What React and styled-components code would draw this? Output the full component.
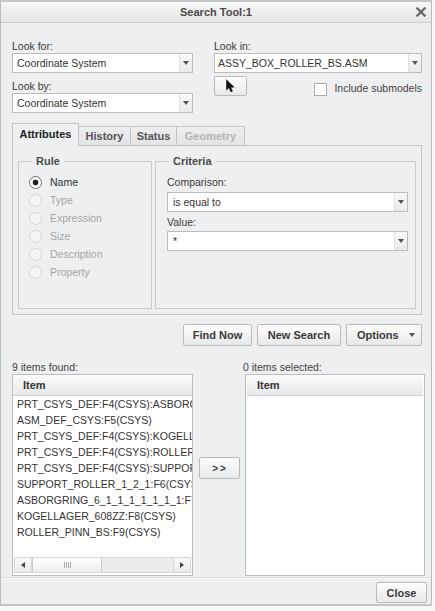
import React from "react";
import styled, { createGlobalStyle } from "styled-components";

const GlobalStyle = createGlobalStyle`
  html, body { margin: 0; padding: 0; background: #f7f7f7; }
  body {
    font-family: "Liberation Sans", Arial, sans-serif;
    font-size: 10.5px;
    color: #333;
  }
  * { box-sizing: border-box; }
`;

const Window = styled.div`
  width: 432px;
  height: 606px;
  border: 1px solid #b7babb;
  border-top: 2px solid #c6c8c9;
  border-bottom: 2px solid #c3c5c6;
  background: #edeff0;
  display: flex;
  flex-direction: column;
`;

const TitleBar = styled.div`
  height: 21px;
  flex: none;
  border-bottom: 1px solid #c9cbcc;
  background: linear-gradient(#f6f7f7, #e4e6e7);
  display: flex;
  align-items: center;
  justify-content: center;
  position: relative;
`;

const Title = styled.span`
  font-size: 11px;
  font-weight: bold;
  color: #4a4a4a;
`;

const CloseX = styled.span`
  position: absolute;
  right: 5px;
  top: 5px;
  display: flex;
`;

const Body = styled.div`
  flex: 1;
  padding: 16px 9px 1px 11px;
  display: flex;
  flex-direction: column;
`;

const TopGrid = styled.div`
  display: grid;
  grid-template-columns: 181px 1fr;
  column-gap: 21px;
`;

const Column = styled.div`
  display: flex;
  flex-direction: column;
`;

const Label = styled.div`
  height: 14px;
  line-height: 14px;
  margin-top: ${(p) => p.$top || 0}px;
  color: #3a3a3a;
`;

const SelectBox = styled.div`
  height: 20px;
  margin-top: ${(p) => p.$top || 0}px;
  border: 1px solid #b9bdbf;
  background: #fff;
  display: flex;
`;

const SelectText = styled.span`
  flex: 1;
  padding-left: ${(p) => p.$pad || 4}px;
  line-height: 18px;
  white-space: nowrap;
  overflow: hidden;
  color: #333;
`;

const DropButton = styled.span`
  width: 13px;
  border-left: 1px solid #dfe1e2;
  background: linear-gradient(#f8f8f8, #e9eaea);
  display: flex;
  align-items: center;
  justify-content: center;
`;

const Arrow = styled.span`
  display: block;
  width: 0;
  height: 0;
  border-left: 3.5px solid transparent;
  border-right: 3.5px solid transparent;
  border-top: 4px solid #555;
  margin-left: ${(p) => (p.$push ? "auto" : "0")};
`;

const PickRow = styled.div`
  margin-top: 3px;
  display: flex;
  align-items: center;
`;

const Button = styled.button`
  font-family: inherit;
  height: ${(p) => p.$h || 22}px;
  width: ${(p) => p.$w}px;
  padding: 0;
  border: 1px solid #b7babb;
  border-radius: 2px;
  background: linear-gradient(#fdfdfd, #e7e9ea);
  font-size: 11px;
  font-weight: bold;
  color: #3a3a3a;
  display: flex;
  align-items: center;
  justify-content: center;
  flex: none;
`;

const OptionsButton = styled(Button)`
  justify-content: flex-start;
  padding: 0 6px 0 10px;
`;

const MoveButton = styled(Button)`
  font-size: 10px;
  letter-spacing: 2px;
  padding-left: 2px;
`;

const Check = styled.span`
  width: 13px;
  height: 13px;
  margin-left: auto;
  margin-top: 6px;
  border: 1px solid #a9adaf;
  background: #fff;
`;

const CheckLabel = styled.span`
  margin-left: 7px;
  margin-top: 4px;
  color: #444;
`;

const TabStrip = styled.div`
  margin-top: 10px;
  height: 22px;
  display: flex;
  align-items: flex-end;
  position: relative;
  z-index: 1;
`;

const Tab = styled.div`
  width: ${(p) => p.$w}px;
  height: ${(p) => (p.$active ? 23 : 19)}px;
  margin-bottom: ${(p) => (p.$active ? -1 : 0)}px;
  border: 1px solid #c2c5c6;
  border-bottom: none;
  border-left: ${(p) => (p.$first ? "1px solid #c2c5c6" : "none")};
  background: ${(p) =>
    p.$active ? "#edeff0" : "linear-gradient(#eceeef, #e2e4e5)"};
  font-size: 11px;
  font-weight: bold;
  color: ${(p) => (p.$disabled ? "#b2b5b7" : p.$active ? "#222" : "#555")};
  display: flex;
  align-items: center;
  justify-content: center;
  padding-bottom: ${(p) => (p.$active ? 3 : 0)}px;
`;

const Panel = styled.div`
  height: 170px;
  border: 1px solid #c2c5c6;
  padding: 9px 5px 5px 5px;
  display: flex;
  gap: 3px;
`;

const Group = styled.fieldset`
  margin: 0;
  padding: 0;
  min-width: 0;
  width: ${(p) => (p.$w ? `${p.$w}px` : "auto")};
  flex: ${(p) => (p.$w ? "none" : 1)};
  border: 1px solid #c8cbcc;
  display: flex;
  flex-direction: column;
`;

const Legend = styled.legend`
  margin-left: 13px;
  padding: 0 4px;
  line-height: 13px;
  font-size: 11px;
  font-weight: bold;
  color: #4a4a4a;
`;

const RadioList = styled.div`
  padding: 5px 0 0 10px;
  display: flex;
  flex-direction: column;
`;

const RadioRow = styled.div`
  height: 18px;
  display: flex;
  align-items: center;
  color: ${(p) => (p.$disabled ? "#a3a6a8" : "#333")};
`;

const RadioDot = styled.span`
  width: 13px;
  height: 13px;
  border-radius: 50%;
  border: 1px solid ${(p) => (p.$checked ? "#6f7375" : "#d2d4d5")};
  background: ${(p) =>
    p.$checked
      ? "radial-gradient(circle, #222 0 2.6px, #fff 3.2px)"
      : "#f4f5f5"};
  margin-right: 8px;
  flex: none;
`;

const CriteriaBody = styled.div`
  padding: 7px 7px 0 11px;
  display: flex;
  flex-direction: column;
`;

const ActionRow = styled.div`
  margin-top: 9px;
  display: flex;
  justify-content: flex-end;
  gap: 5px;
`;

const ListsGrid = styled.div`
  margin-top: 14px;
  margin-right: -3px;
  display: grid;
  grid-template-columns: 181px 52px 1fr;
  grid-template-rows: 14px 202px;
`;

const ListLabel = styled.div`
  line-height: 14px;
  margin-left: ${(p) => p.$shift || 0}px;
  color: #444;
`;

const ListBox = styled.div`
  border: 1px solid #b9bdbf;
  background: #fff;
  display: flex;
  flex-direction: column;
  overflow: hidden;
`;

const ListHeader = styled.div`
  height: 21px;
  flex: none;
  margin: ${(p) => (p.$inset ? "0 1px" : "0")};
  border-bottom: 1px solid #cfd2d3;
  background: linear-gradient(#fbfbfb, #e7e9ea);
  box-shadow: inset 0 1px 0 #fff;
  font-size: 11px;
  font-weight: bold;
  color: #333;
  line-height: 20px;
  padding-left: 10px;
`;

const Rows = styled.div`
  flex: 1;
  overflow: hidden;
`;

const Row = styled.div`
  height: 16px;
  line-height: 16px;
  padding-left: 4px;
  white-space: nowrap;
  font-size: 10.5px;
  color: #333;
`;

const ScrollBar = styled.div`
  height: 16px;
  flex: none;
  margin: 0 1px 2px 1px;
  display: flex;
  background: #ebeced;
  border: 1px solid #d4d6d7;
`;

const ScrollButton = styled.span`
  width: 17px;
  flex: none;
  background: linear-gradient(#f9f9f9, #e9eaeb);
  border-left: ${(p) => (p.$right ? "1px solid #d4d6d7" : "none")};
  border-right: ${(p) => (p.$right ? "none" : "1px solid #d4d6d7")};
  display: flex;
  align-items: center;
  justify-content: center;
`;

const ScrollTriangle = styled.span`
  width: 0;
  height: 0;
  border-top: 3.5px solid transparent;
  border-bottom: 3.5px solid transparent;
  border-left: ${(p) => (p.$right ? "4px solid #444" : "none")};
  border-right: ${(p) => (p.$right ? "none" : "4px solid #444")};
`;

const Thumb = styled.span`
  width: 70px;
  flex: none;
  border: 1px solid #c9cbcc;
  border-top: none;
  border-bottom: none;
  background: linear-gradient(#ffffff, #eceeee);
  display: flex;
  align-items: center;
  justify-content: center;
  gap: 1px;
`;

const Grip = styled.span`
  width: 1px;
  height: 6px;
  background: #a9acae;
`;

const Track = styled.span`
  flex: 1;
`;

const MoveCell = styled.div`
  display: flex;
  justify-content: center;
  padding: 83px 0 0 0;
`;

const Footer = styled.div`
  flex: none;
  height: 27px;
  border-top: 1px solid #dadcdd;
  box-shadow: inset 0 1px 0 #f8f9f9;
  padding: 4px 4px 1px 0;
  display: flex;
  justify-content: flex-end;
`;

const CloseIcon = () => (
  <svg width="10" height="10" viewBox="0 0 10 10">
    <path
      d="M1.5 1.5 L8.5 8.5 M8.5 1.5 L1.5 8.5"
      stroke="#6a6a6a"
      strokeWidth="2.4"
      strokeLinecap="square"
    />
  </svg>
);

const PointerIcon = () => (
  <svg width="9" height="14" viewBox="0 0 10 15">
    <path
      d="M0.5 0.5 L0.5 12 L3.3 9.4 L5.3 14 L7.2 13.2 L5.3 8.8 L9 8.8 Z"
      fill="#111"
      stroke="#111"
      strokeWidth="0.6"
      strokeLinejoin="round"
    />
  </svg>
);

const Select = ({ value, top, pad }) => (
  <SelectBox $top={top}>
    <SelectText $pad={pad}>{value}</SelectText>
    <DropButton>
      <Arrow />
    </DropButton>
  </SelectBox>
);

const rules = [
  { name: "Name", checked: true },
  { name: "Type" },
  { name: "Expression" },
  { name: "Size" },
  { name: "Description" },
  { name: "Property" },
];

const foundItems = [
  "PRT_CSYS_DEF:F4(CSYS):ASBORGRING_6",
  "ASM_DEF_CSYS:F5(CSYS)",
  "PRT_CSYS_DEF:F4(CSYS):KOGELLAGER_608ZZ",
  "PRT_CSYS_DEF:F4(CSYS):ROLLER_PINN_BS",
  "PRT_CSYS_DEF:F4(CSYS):SUPPORT_ROLLER",
  "SUPPORT_ROLLER_1_2_1:F6(CSYS)",
  "ASBORGRING_6_1_1_1_1_1_1_1:F7(CSYS)",
  "KOGELLAGER_608ZZ:F8(CSYS)",
  "ROLLER_PINN_BS:F9(CSYS)",
];

const tabs = [
  { name: "Attributes", w: 67, active: true },
  { name: "History", w: 52 },
  { name: "Status", w: 46 },
  { name: "Geometry", w: 68, disabled: true },
];

export default function App() {
  return (
    <>
      <GlobalStyle />
      <Window>
        <TitleBar>
          <Title>Search Tool:1</Title>
          <CloseX>
            <CloseIcon />
          </CloseX>
        </TitleBar>

        <Body>
          <TopGrid>
            <Column>
              <Label>Look for:</Label>
              <Select value="Coordinate System" />
              <Label $top={6}>Look by:</Label>
              <Select value="Coordinate System" />
            </Column>
            <Column>
              <Label>Look in:</Label>
              <Select value="ASSY_BOX_ROLLER_BS.ASM" pad={3} />
              <PickRow>
                <Button $w={33} $h={20}>
                  <PointerIcon />
                </Button>
                <Check />
                <CheckLabel>Include submodels</CheckLabel>
              </PickRow>
            </Column>
          </TopGrid>

          <TabStrip>
            {tabs.map((t, i) => (
              <Tab
                key={t.name}
                $w={t.w}
                $active={t.active}
                $first={i === 0}
                $disabled={t.disabled}
              >
                {t.name}
              </Tab>
            ))}
          </TabStrip>
          <Panel>
            <Group $w={134}>
              <Legend>Rule</Legend>
              <RadioList>
                {rules.map((r) => (
                  <RadioRow key={r.name} $disabled={!r.checked}>
                    <RadioDot $checked={r.checked} />
                    {r.name}
                  </RadioRow>
                ))}
              </RadioList>
            </Group>
            <Group>
              <Legend>Criteria</Legend>
              <CriteriaBody>
                <Label>Comparison:</Label>
                <Select value="is equal to" top={3} pad={5} />
                <Label $top={3}>Value:</Label>
                <Select value="*" top={2} pad={5} />
              </CriteriaBody>
            </Group>
          </Panel>

          <ActionRow>
            <Button $w={69}>Find Now</Button>
            <Button $w={84}>New Search</Button>
            <OptionsButton $w={76}>
              Options
              <Arrow $push />
            </OptionsButton>
          </ActionRow>

          <ListsGrid>
            <ListLabel>9 items found:</ListLabel>
            <div />
            <ListLabel $shift={-2}>0 items selected:</ListLabel>

            <ListBox>
              <ListHeader>Item</ListHeader>
              <Rows>
                {foundItems.map((item) => (
                  <Row key={item}>{item}</Row>
                ))}
              </Rows>
              <ScrollBar>
                <ScrollButton>
                  <ScrollTriangle />
                </ScrollButton>
                <Thumb>
                  <Grip />
                  <Grip />
                  <Grip />
                  <Grip />
                </Thumb>
                <Track />
                <ScrollButton $right>
                  <ScrollTriangle $right />
                </ScrollButton>
              </ScrollBar>
            </ListBox>
            <MoveCell>
              <MoveButton $w={41} $h={22}>
                &gt;&gt;
              </MoveButton>
            </MoveCell>
            <ListBox>
              <ListHeader $inset>Item</ListHeader>
            </ListBox>
          </ListsGrid>
        </Body>

        <Footer>
          <Button $w={51} $h={21}>
            Close
          </Button>
        </Footer>
      </Window>
    </>
  );
}
